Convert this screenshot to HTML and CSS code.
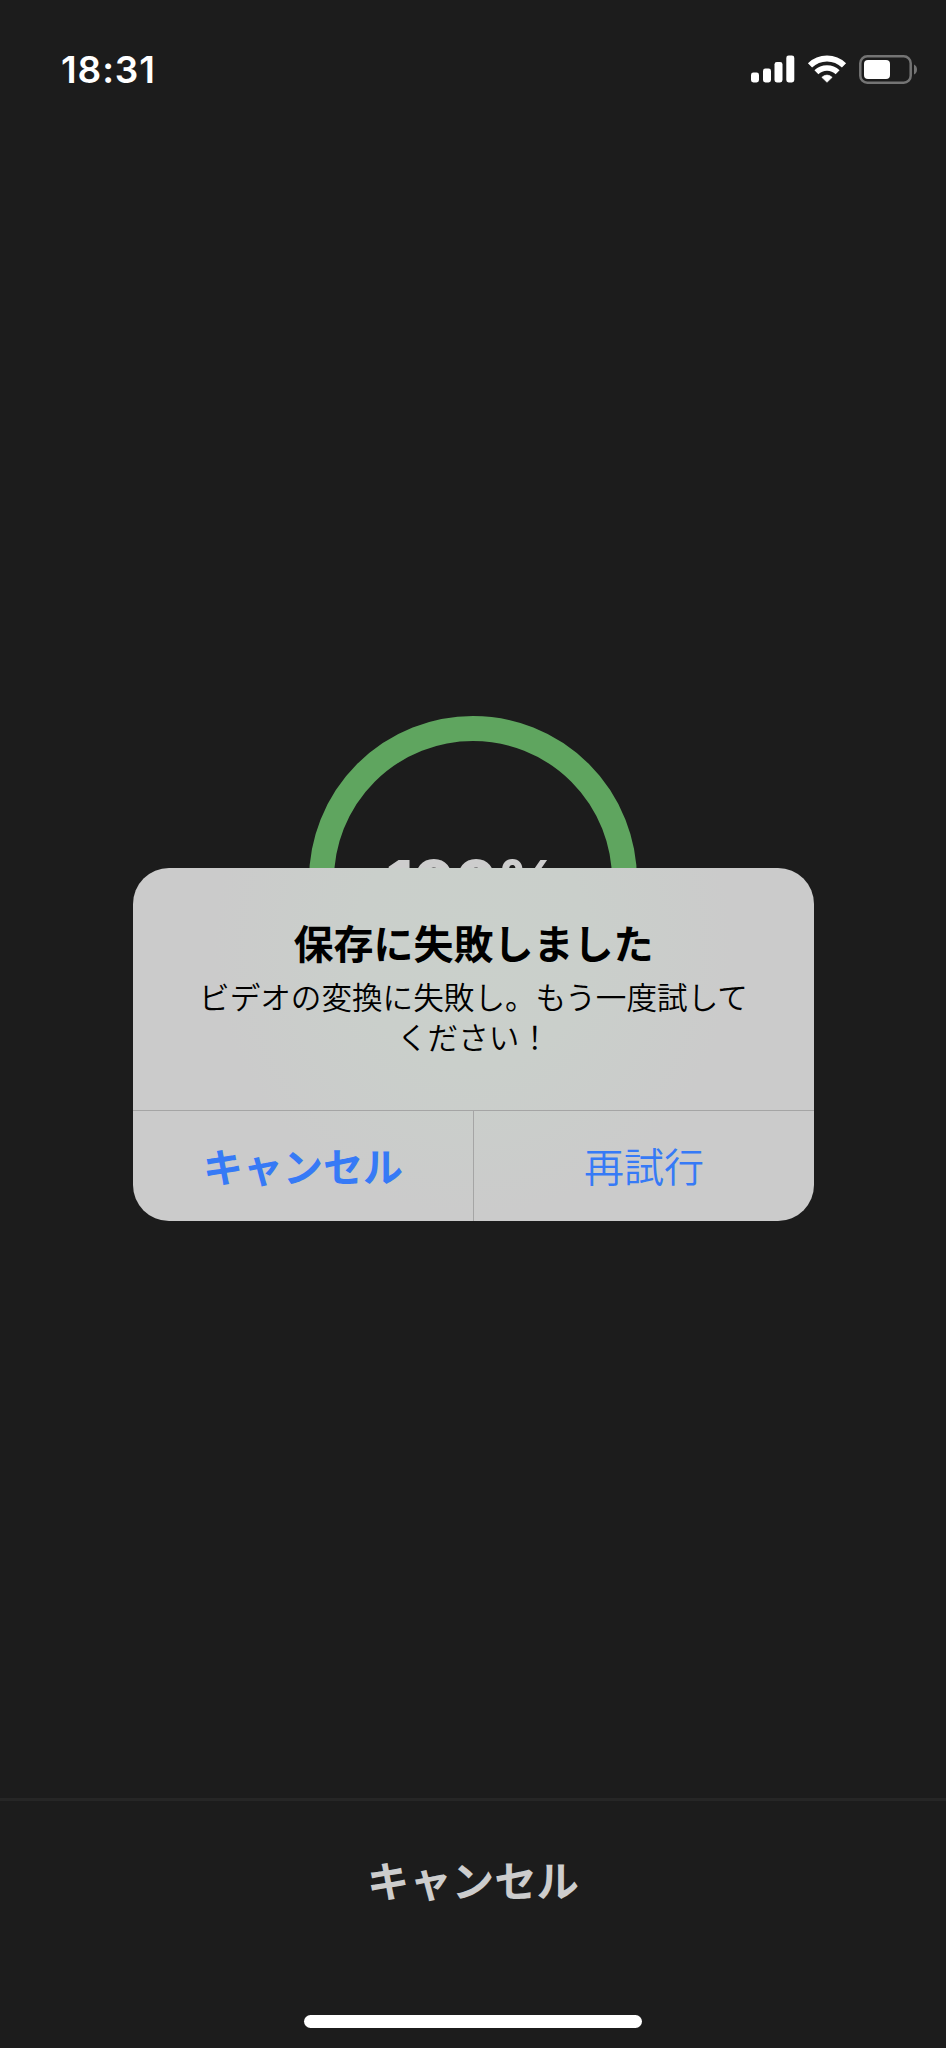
FILE: index.html
```
<!DOCTYPE html>
<html lang="ja">
<head>
<meta charset="utf-8">
<title>保存</title>
<link rel="stylesheet" href="styles.css">
</head>
<body>
<div class="screen">
  <header class="status-bar">
    <span class="time">18:31</span>
    <div class="status-icons">
      <svg class="signal" width="44" height="28" viewBox="0 0 44 28" fill="#fff">
        <rect x="0" y="17.5" width="8" height="10" rx="2.4"/>
        <rect x="12" y="13.5" width="8" height="14" rx="2.4"/>
        <rect x="23.5" y="7" width="8" height="20.5" rx="2.4"/>
        <rect x="35.300" y="0.500" width="8" height="27" rx="2.4"/>
      </svg>
      <svg class="wifi" width="40" height="28" viewBox="0 0 40 28" fill="none" stroke="#fff" stroke-width="6">
        <path d="M3 10.300A24.500 24.500 0 0 1 37 10.300"/>
        <path d="M9.400 17.300A15.200 15.200 0 0 1 30.600 17.300" stroke-width="5.600"/>
        <path d="M20 27.300L14.800 22.300Q20 17.800 25.200 22.300Z" fill="#fff" stroke="#fff" stroke-width=".6" stroke-linejoin="round"/>
      </svg>
      <svg class="battery" width="59" height="29" viewBox="0 0 59 29">
        <rect x="1.300" y="1.300" width="50.400" height="26.400" rx="7" fill="none" stroke="#747474" stroke-width="2.500"/>
        <rect x="5" y="5" width="26" height="19" rx="4" fill="#fff"/>
        <path d="M55 9.500Q58 11 58 14.500T55 19.500Z" fill="#747474"/>
      </svg>
    </div>
  </header>
  <main class="stage">
    <div class="progress"><span class="percent">100%</span></div>
    <section class="dialog" role="alertdialog">
      <div class="dialog-body">
        <h1 class="dialog-title">保存に失敗しました</h1>
        <p class="dialog-text">ビデオの変換に失敗し。もう一度試して<br>ください！</p>
      </div>
      <div class="dialog-actions">
        <button class="action action-cancel">キャンセル</button>
        <button class="action action-retry">再試行</button>
      </div>
    </section>
  </main>
  <footer class="bottom">
    <button class="bottom-cancel">キャンセル</button>
    <div class="home-indicator"></div>
  </footer>
</div>
</body>
</html>
```
FILE: styles.css
```
* { box-sizing: border-box; }
body {
  margin: 0;
  background: #1c1c1c;
  font-family: "Noto Sans CJK JP", sans-serif;
}
button {
  border: 0;
  padding: 0;
  background: none;
  font-family: inherit;
}
.screen {
  width: 946px;
  height: 2048px;
  display: flex;
  flex-direction: column;
  overflow: hidden;
}
.status-bar {
  height: 138px;
  flex: none;
  display: flex;
  justify-content: space-between;
  padding: 46px 28px 0 61px;
}
.time {
  font: 600 37px/48px Inter, sans-serif;
  letter-spacing: 0.9px;
  color: #fff;
}
.status-icons { display: flex; padding-top: 9px; }
.signal { margin-right: 12px; }
.wifi { margin-right: 12px; }
.stage {
  position: relative;
  flex: 1;
  display: flex;
  flex-direction: column;
  align-items: center;
  padding-top: 578px;
}
.progress {
  width: 328px;
  height: 328px;
  border: 25.5px solid #5fa55f;
  border-radius: 50%;
  display: flex;
  align-items: center;
  justify-content: center;
}
.percent {
  font: 800 61px/70px Inter, sans-serif;
  padding-top: 3px;
  color: #cdcdcd;
}
.dialog {
  position: absolute;
  top: 730px;
  left: 133px;
  width: 681px;
  height: 353px;
  display: flex;
  flex-direction: column;
  border-radius: 36px;
  overflow: hidden;
  background: radial-gradient(ellipse 260px 270px at 50% 22%, #cad0cb 0%, #cacfcb 45%, #cbcbcb 100%);
}
.dialog-body {
  height: 243px;
  border-bottom: 1px solid #a5a5a5;
  text-align: center;
  padding-top: 44px;
}
.dialog-title {
  margin: 0;
  font-size: 40px;
  line-height: 60px;
  font-weight: 700;
  color: #000;
}
.dialog-text {
  margin: 4px 0 0;
  font-size: 30.6px;
  line-height: 40px;
  font-weight: 350;
  color: #000;
}
.dialog-actions { flex: 1; display: flex; }
.action {
  flex: 1;
  padding-bottom: 2px;
  font-size: 40px;
  line-height: 60px;
  color: #367af6;
}
.action-cancel { font-weight: 700; border-right: 1px solid #a5a5a5; }
.action-retry { font-weight: 350; }
.bottom {
  height: 250px;
  flex: none;
  border-top: 3px solid #262626;
  display: flex;
  flex-direction: column;
  align-items: center;
  padding-top: 48px;
}
.bottom-cancel {
  font-size: 42.4px;
  line-height: 60px;
  font-weight: 700;
  color: #cdcdcd;
}
.home-indicator {
  width: 338px;
  height: 13px;
  border-radius: 7px;
  background: #fff;
  margin-top: 106px;
}
```
